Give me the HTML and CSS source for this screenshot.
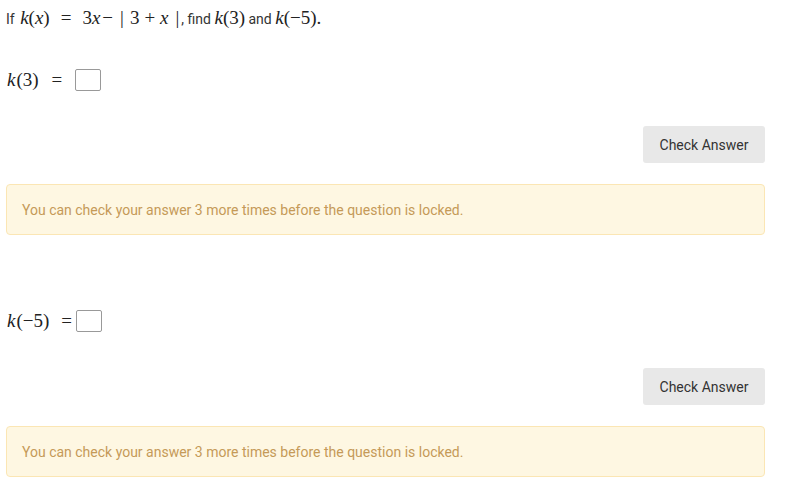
FILE: index.html
```html
<!DOCTYPE html>
<html>
<head>
<meta charset="utf-8">
<link rel="stylesheet" href="styles.css">
</head>
<body>
<div class="page">
  <p class="question">If <span class="m first"><i>k</i>(<i>x</i>)</span><span class="m eq">=</span><span class="m">3<i>x</i><span class="minus">−</span></span><span class="m abs"><span class="bar">|</span>3<span class="plus">+</span><i>x</i><span class="bar bar-r">|</span></span>, find <span class="m"><i>k</i>(3)</span> and <span class="m"><i>k</i>(−5).</span></p>

  <div class="part">
    <div class="answer-row">
      <span class="m"><i>k</i>(3)</span><span class="m eq eq-row">=</span><span class="box"></span>
    </div>
    <div class="actions"><button class="check">Check Answer</button></div>
    <div class="alert">You can check your answer 3 more times before the question is locked.</div>
  </div>

  <div class="part part2">
    <div class="answer-row">
      <span class="m"><i>k</i>(−5)</span><span class="m eq eq-tight">=</span><span class="box"></span>
    </div>
    <div class="actions"><button class="check">Check Answer</button></div>
    <div class="alert">You can check your answer 3 more times before the question is locked.</div>
  </div>
</div>
</body>
</html>
```

FILE: styles.css
```css
html, body {
  margin: 0;
  padding: 0;
  background: #ffffff;
}
.page {
  padding: 0 29px 0 6px;
  font-family: Roboto, "Liberation Sans", sans-serif;
  font-size: 14px;
  color: #333333;
}
.question {
  margin: 0;
  padding-top: 6px;
  height: 24px;
  line-height: 24px;
  display: flex;
  align-items: baseline;
  white-space: pre;
}
.m {
  font-family: "Liberation Serif", "DejaVu Serif", serif;
  font-size: 19px;
  color: #222222;
}
.m i {
  font-style: italic;
}
.question .first { margin-left: 2px; }
.eq {
  margin: 0 11px;
}
.eq-row {
  margin: 0 13px 0 13px;
}
.minus {
  margin-left: 2px;
}
.abs {
  margin-left: 7px;
  margin-right: 2px;
}
.bar {
  margin-right: 6px;
}
.bar-r {
  margin: 0 0 0 7px;
}
.plus {
  margin: 0 5px;
}
.part {
  display: flex;
  flex-direction: column;
}
.answer-row {
  display: flex;
  align-items: center;
  height: 22px;
  margin-top: 39px;
}
.part .answer-row .m:first-child { margin-left: 1px; }
.part .answer-row .m:first-child i { margin-right: 1px; }
.part2 .answer-row {
  margin-top: 75px;
}
.eq-tight {
  margin: 0 4px 0 12px;
}
.box {
  display: inline-block;
  width: 24px;
  height: 20px;
  border: 1px solid #999999;
  border-radius: 2px;
  background: #fff;
}
.actions {
  display: flex;
  justify-content: flex-end;
  margin-top: 35px;
}
.part2 .actions {
  margin-top: 36px;
}
.check {
  font-family: Roboto, "Liberation Sans", sans-serif;
  font-size: 14px;
  color: #333333;
  background: #e8e8e8;
  border: none;
  border-radius: 3px;
  width: 122px;
  height: 37px;
  padding: 0;
  cursor: pointer;
}
.alert {
  margin-top: 21px;
  height: 49px;
  border: 1px solid #fbe6b4;
  border-radius: 4px;
  background: #fef7e2;
  color: #c59a58;
  display: flex;
  align-items: center;
  padding: 0 15px;
}
```
